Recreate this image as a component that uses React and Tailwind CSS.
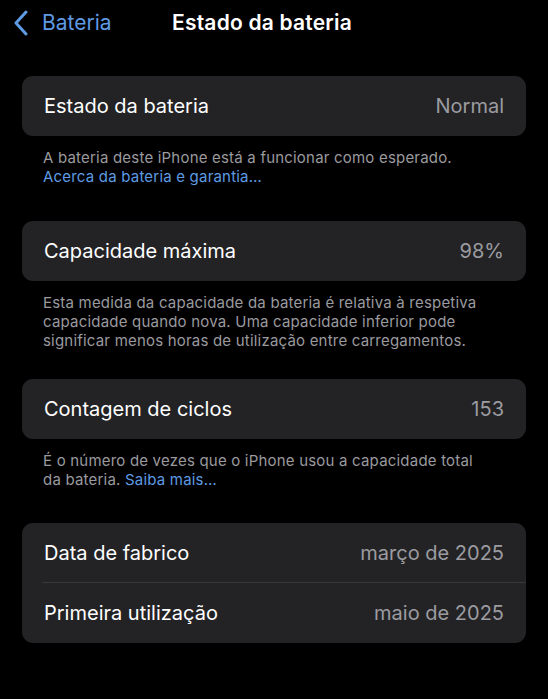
import React from "react";

const Row = ({ label, value, divider }) => (
    <div className="relative flex h-[60px] items-center justify-between px-[22px]">
        <span className="text-[20px] text-white">{label}</span>
        <span className="text-[20px] text-[#9b9ba0]">{value}</span>
        {divider && <div className="absolute bottom-0 left-[20px] right-0 h-px bg-[#38383b]" />}
    </div>
);

const Note = ({ children }) => (
    <p className="mt-3 pl-[21px] pr-[41px] text-[15px] leading-[19px] tracking-[0.2px] text-[#9a9a9f]">{children}</p>
);

export default function App() {
    return (
        <div
            className="min-h-[699px] w-[548px] bg-black px-[22px]"
            style={{ fontFamily: "Inter, 'Noto Sans', sans-serif" }}
        >
            {/* Nav bar */}
            <div className="relative flex h-[45px] items-center">
                <div className="-ml-[9px] flex items-center gap-[13px] text-[#5e9be3]">
                    <svg width="16" height="26" viewBox="0 0 16 26" fill="none">
                        <path d="M13 2 L3 13 L13 24" stroke="#5e9be3" strokeWidth="3" strokeLinecap="round" strokeLinejoin="round" />
                    </svg>
                    <span className="text-[21px]">Bateria</span>
                </div>
                <h1 className="absolute left-[150px] text-[21px] font-semibold tracking-[0.2px] text-white">
                    Estado da bateria
                </h1>
            </div>

            {/* Battery state */}
            <div className="mt-[31px] rounded-[11px] bg-[#232325]">
                <Row label="Estado da bateria" value="Normal" />
            </div>
            <Note>
                A bateria deste iPhone está a funcionar como esperado.
                <br />
                <span className="text-[#5e9be3]">Acerca da bateria e garantia…</span>
            </Note>

            {/* Max capacity */}
            <div className="mt-[35px] rounded-[11px] bg-[#232325]">
                <Row label="Capacidade máxima" value="98%" />
            </div>
            <Note>
                Esta medida da capacidade da bateria é relativa à respetiva capacidade quando nova. Uma capacidade inferior pode significar menos horas de utilização entre carregamentos.
            </Note>

            {/* Cycle count */}
            <div className="mt-[29px] rounded-[11px] bg-[#232325]">
                <Row label="Contagem de ciclos" value="153" />
            </div>
            <Note>
                É o número de vezes que o iPhone usou a capacidade total da bateria.{" "}
                <span className="text-[#5e9be3]">Saiba mais…</span>
            </Note>

            {/* Dates */}
            <div className="mt-[34px] rounded-[11px] bg-[#232325]">
                <Row label="Data de fabrico" value="março de 2025" divider />
                <Row label="Primeira utilização" value="maio de 2025" />
            </div>
        </div>
    );
}
